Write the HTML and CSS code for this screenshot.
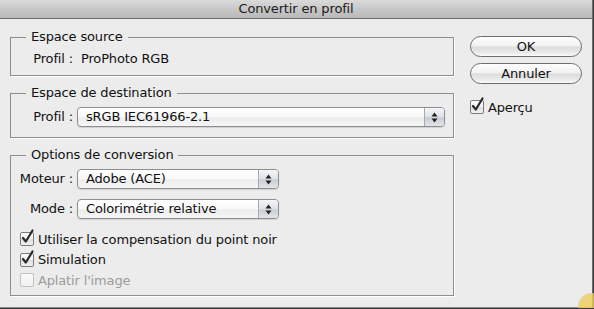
FILE: index.html
```html
<!DOCTYPE html>
<html lang="fr">
<head>
    <meta charset="UTF-8">
    <title>Convertir en profil</title>
    <link rel="stylesheet" href="styles.css">
</head>
<body>
    <div class="window">
        <div class="titlebar">Convertir en profil</div>

        <div class="dialog">
            <div class="panels">
                <fieldset class="group group-source">
                    <legend>Espace source</legend>
                    <div class="row">
                        <span class="label">Profil :</span>
                        <span class="value">ProPhoto RGB</span>
                    </div>
                </fieldset>

                <fieldset class="group group-dest">
                    <legend>Espace de destination</legend>
                    <div class="row">
                        <span class="label">Profil :</span>
                        <div class="popup popup-wide">
                            <span class="popup-text">sRGB IEC61966-2.1</span>
                            <span class="popup-arrows">
                                <svg width="7" height="11" viewBox="0 0 7 11"><path d="M0.5 4.5 L3.5 0.5 L6.5 4.5 Z M0.5 6.5 L6.5 6.5 L3.5 10.5 Z" fill="#222"/></svg>
                            </span>
                        </div>
                    </div>
                </fieldset>

                <fieldset class="group group-options">
                    <legend>Options de conversion</legend>
                    <div class="row">
                        <span class="label">Moteur :</span>
                        <div class="popup">
                            <span class="popup-text">Adobe (ACE)</span>
                            <span class="popup-arrows">
                                <svg width="7" height="11" viewBox="0 0 7 11"><path d="M0.5 4.5 L3.5 0.5 L6.5 4.5 Z M0.5 6.5 L6.5 6.5 L3.5 10.5 Z" fill="#222"/></svg>
                            </span>
                        </div>
                    </div>
                    <div class="row row-mode">
                        <span class="label">Mode :</span>
                        <div class="popup">
                            <span class="popup-text">Colorimétrie relative</span>
                            <span class="popup-arrows">
                                <svg width="7" height="11" viewBox="0 0 7 11"><path d="M0.5 4.5 L3.5 0.5 L6.5 4.5 Z M0.5 6.5 L6.5 6.5 L3.5 10.5 Z" fill="#222"/></svg>
                            </span>
                        </div>
                    </div>

                    <div class="checks">
                        <label class="check">
                            <span class="box"><svg class="mark" width="14" height="16" viewBox="0 0 14 16"><path d="M3 9 L5.8 12.5 L12.5 1.5" /></svg></span>
                            Utiliser la compensation du point noir
                        </label>
                        <label class="check check-mid">
                            <span class="box"><svg class="mark" width="14" height="16" viewBox="0 0 14 16"><path d="M3 9 L5.8 12.5 L12.5 1.5" /></svg></span>
                            Simulation
                        </label>
                        <label class="check disabled">
                            <span class="box"></span>
                            Aplatir l'image
                        </label>
                    </div>
                </fieldset>
            </div>

            <div class="actions">
                <button class="push" type="button">OK</button>
                <button class="push" type="button">Annuler</button>
                <label class="check preview">
                    <span class="box"><svg class="mark" width="14" height="16" viewBox="0 0 14 16"><path d="M3 9 L5.8 12.5 L12.5 1.5" /></svg></span>
                    Aperçu
                </label>
            </div>
        </div>

        <span class="halo"></span>
    </div>
</body>
</html>
```

FILE: styles.css
```css
* {
    margin: 0;
    padding: 0;
    box-sizing: border-box;
}

html, body {
    overflow: hidden;
}

body {
    background: #3c3c3c;
    font-family: 'DejaVu Sans', sans-serif;
    font-size: 13px;
    letter-spacing: -0.15px;
    color: #111;
}

.window {
    position: relative;
    width: 593px;
    height: 308px;
    background: #ececec;
    border-right: 1px solid #6a6a6a;
    border-bottom: 1px solid #8a8a8a;
}

.titlebar {
    height: 19px;
    line-height: 18px;
    text-align: center;
    background: linear-gradient(#dadada, #c4c4c4 60%, #b9b9b9);
    border-bottom: 1px solid #707070;
    color: #1a1a1a;
}

.dialog {
    display: flex;
    padding: 10px 0 0 10px;
}

.panels {
    width: 444px;
    display: flex;
    flex-direction: column;
    gap: 9px;
}

/* group boxes */
.group {
    border: 1px solid #8e8e8e;
    box-shadow: 1px 1px 0 #fff;
    min-width: 0;
    padding: 6px 8px 8px 0;
}

.group legend {
    margin-left: 15px;
    padding: 0 5px;
    line-height: 16px;
}

.group-dest {
    padding-bottom: 10px;
}

.group-options {
    padding-bottom: 5px;
}

.row {
    display: flex;
    align-items: center;
    line-height: 16px;
}

.row-mode {
    margin-top: 10px;
}

.label {
    width: 62px;
    margin-right: 4px;
    text-align: right;
}

.value {
    padding-left: 4px;
}

/* popup menus */
.popup {
    display: flex;
    width: 202px;
    height: 20px;
    border: 1px solid #8d8d8d;
    border-radius: 4px;
    background: linear-gradient(#ffffff, #f8f8f8 50%, #ececec 55%, #f6f6f6);
    box-shadow: 0 1px 1px rgba(0, 0, 0, 0.12);
}

.popup-wide {
    width: 368px;
}

.popup-text {
    flex: 1;
    padding-left: 8px;
    line-height: 18px;
    white-space: nowrap;
}

.popup-arrows {
    width: 20px;
    display: flex;
    align-items: center;
    justify-content: center;
    border-left: 1px solid #a6a9ae;
    border-radius: 0 3px 3px 0;
    background: linear-gradient(#f4f6f9, #dde1e6 50%, #c9cdd4 55%, #e2e5ea);
}

/* checkboxes */
.checks {
    margin-top: 10px;
    padding-left: 9px;
}

.check {
    display: flex;
    align-items: center;
    height: 20px;
    gap: 4px;
    white-space: nowrap;
}

.check-mid {
    height: 21px;
}

.box {
    position: relative;
    width: 14px;
    height: 14px;
    flex: none;
    border: 1px solid #7c7c7c;
    border-radius: 2px;
    background: linear-gradient(#ffffff, #f0f0f0 50%, #dedede 55%, #f2f2f2);
}

.mark {
    position: absolute;
    left: -1px;
    top: -4px;
    overflow: visible;
}

.mark path {
    fill: none;
    stroke: #2a2a2a;
    stroke-width: 2.2;
    stroke-linecap: round;
    stroke-linejoin: round;
}

.disabled {
    color: #9c9c9c;
}

.disabled .box {
    border-color: #c2c2c2;
    background: linear-gradient(#fafafa, #f0f0f0);
}

/* buttons */
.actions {
    width: 112px;
    margin-left: 16px;
    padding-top: 7px;
    display: flex;
    flex-direction: column;
}

.push {
    height: 21px;
    border: 1px solid #6e6e6e;
    border-radius: 11px;
    background: linear-gradient(#fdfdfd, #f2f2f2 45%, #dddddd 52%, #e8e8e8 80%, #fafafa);
    font-family: 'DejaVu Sans', sans-serif;
    font-size: 13px;
    letter-spacing: -0.15px;
    color: #111;
    line-height: 19px;
}

.push + .push {
    margin-top: 6px;
}

.preview {
    margin-top: 15px;
    height: 16px;
}

.halo {
    position: absolute;
    right: -14px;
    bottom: -14px;
    width: 28px;
    height: 28px;
    border-radius: 50%;
    background: rgba(238, 206, 92, 0.8);
}
```
